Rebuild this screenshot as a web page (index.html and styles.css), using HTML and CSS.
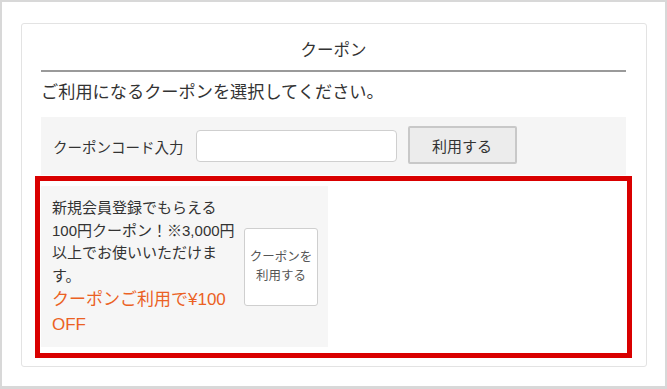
FILE: index.html
```html
<!DOCTYPE html>
<html lang="ja">
<head>
  <meta charset="UTF-8">
  <title>クーポン</title>
  <link rel="stylesheet" href="styles.css">
</head>
<body>
  <div class="frame">
    <div class="card">
      <h2 class="card-title">クーポン</h2>
      <p class="lead">ご利用になるクーポンを選択してください。</p>

      <div class="code-row">
        <label class="code-label" for="couponCode">クーポンコード入力</label>
        <input type="text" id="couponCode" class="code-input">
        <button class="code-btn">利用する</button>
      </div>

      <div class="highlight">
        <div class="coupon">
          <div class="coupon-text">
            <p class="coupon-desc">新規会員登録でもらえる<br>100円クーポン！※3,000円<br>以上でお使いいただけま<br>す。</p>
            <p class="coupon-off">クーポンご利用で¥100<br>OFF</p>
          </div>
          <button class="coupon-btn">クーポンを<br>利用する</button>
        </div>
      </div>
    </div>
  </div>
</body>
</html>
```

FILE: styles.css
```css
body {
    margin: 0;
    font-family: "Liberation Sans", "Noto Sans CJK JP", sans-serif;
    color: #333;
    background-color: #fff;
}

.frame {
    width: 667px;
    height: 389px;
    box-sizing: border-box;
    border: 2px solid #d8d8d8;
    border-bottom-width: 3px;
    padding: 21px 18px 0 19px;
}

.card {
    border: 1px solid #e3e3e3;
    border-radius: 3px;
    padding: 14px 20px 8px 19px;
}

.card-title {
    margin: 0;
    font-size: 16.5px;
    font-weight: normal;
    line-height: 24px;
    text-align: center;
    padding-bottom: 8px;
    border-bottom: 2px solid #9a9a9a;
}

.lead {
    margin: 8px 0 0;
    font-size: 17.2px;
    line-height: 25px;
}

.code-row {
    display: flex;
    align-items: center;
    height: 58px;
    margin-top: 12px;
    padding: 0 12px;
    background-color: #f5f5f5;
}

.code-label {
    font-size: 14.5px;
    margin-right: 12px;
}

.code-input {
    width: 201px;
    height: 32px;
    box-sizing: border-box;
    border: 1px solid #cfcfcf;
    border-radius: 4px;
    background: #fff;
    margin: 0 11px 0 0;
}

.code-btn {
    width: 109px;
    height: 38px;
    margin-top: -2px;
    border: 2px solid #c8c8c8;
    border-radius: 2px;
    background-color: #ececec;
    font-family: inherit;
    font-size: 15px;
    color: #333;
}

.highlight {
    margin: 1px -6px 0;
    border: 5px solid #d90000;
    padding: 5px 1px 6px;
}

.coupon {
    display: flex;
    align-items: center;
    width: 287px;
    height: 161px;
    box-sizing: border-box;
    padding: 0 10px 0 11px;
    background-color: #f6f6f6;
}

.coupon-text {
    width: 180px;
    margin-right: 12px;
    margin-top: 1px;
    white-space: nowrap;
}

.coupon-desc {
    margin: 0;
    font-size: 15px;
    line-height: 22.5px;
}

.coupon-off {
    margin: 0;
    font-size: 17px;
    line-height: 25px;
    color: #eb6123;
}

.coupon-btn {
    width: 75px;
    height: 78px;
    padding: 0;
    border: 1px solid #cfcfcf;
    border-radius: 3px;
    background-color: #fff;
    font-family: inherit;
    font-size: 12.5px;
    line-height: 19px;
    color: #555;
}
```
